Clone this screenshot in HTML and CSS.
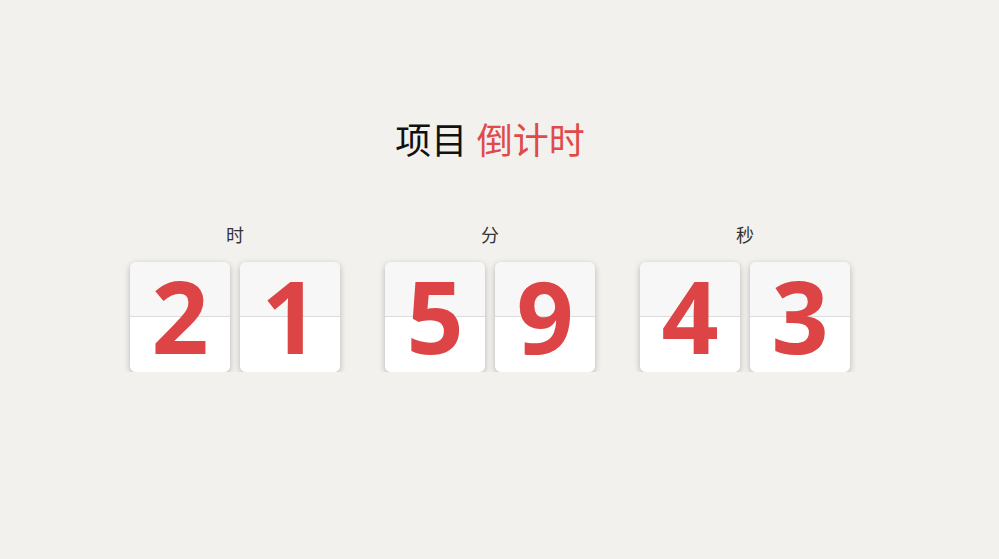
FILE: index.html
```html
<!DOCTYPE html>
<html lang="zh">
<head>
    <meta charset="UTF-8">
    <meta name="viewport" content="width=device-width, initial-scale=1.0">
    <title>项目倒计时</title>
    <link rel="stylesheet" href="styles.css">
</head>
<body>
    <div class="wrap">
        <h1 class="title">项目 <span class="accent">倒计时</span></h1>

        <div class="clock">
            <div class="unit">
                <div class="unit-label">时</div>
                <div class="cards">
                    <div class="card"><span>2</span></div>
                    <div class="card"><span>1</span></div>
                </div>
            </div>
            <div class="unit">
                <div class="unit-label">分</div>
                <div class="cards">
                    <div class="card"><span>5</span></div>
                    <div class="card"><span>9</span></div>
                </div>
            </div>
            <div class="unit">
                <div class="unit-label">秒</div>
                <div class="cards">
                    <div class="card"><span>4</span></div>
                    <div class="card"><span>3</span></div>
                </div>
            </div>
        </div>
    </div>
</body>
</html>
```

FILE: styles.css
```css
body {
    margin: 0;
    background: #f2f1ee;
    font-family: 'Noto Sans', 'Noto Sans CJK SC', sans-serif;
    color: #222;
}
.wrap {
    width: 980px;
    padding-top: 114px;
    text-align: center;
}
.title {
    margin: 0;
    font-size: 36px;
    font-weight: normal;
    line-height: 54px;
    color: #111;
}
.accent {
    color: #e04a4a;
}
.clock {
    display: flex;
    justify-content: center;
    gap: 45px;
    margin-top: 54px;
}
.unit-label {
    font-size: 18px;
    line-height: 26px;
    margin-bottom: 14px;
    color: #333;
}
.cards {
    display: flex;
    gap: 10px;
}
/* flip card: grey top half, thin seam, white bottom half */
.card {
    width: 100px;
    height: 110px;
    border-radius: 6px;
    background: linear-gradient(#f7f7f7 0, #f7f7f7 54px, #dcdcdc 54px, #dcdcdc 55px, #fff 55px);
    box-shadow: 0 2px 6px rgba(0, 0, 0, 0.25);
    display: flex;
    align-items: center;
    justify-content: center;
}
.card span {
    font-family: 'Open Sans', sans-serif;
    font-weight: bold;
    font-size: 100px;
    line-height: 110px;
    margin-top: -5px;
    color: #dc4446;
}
```
